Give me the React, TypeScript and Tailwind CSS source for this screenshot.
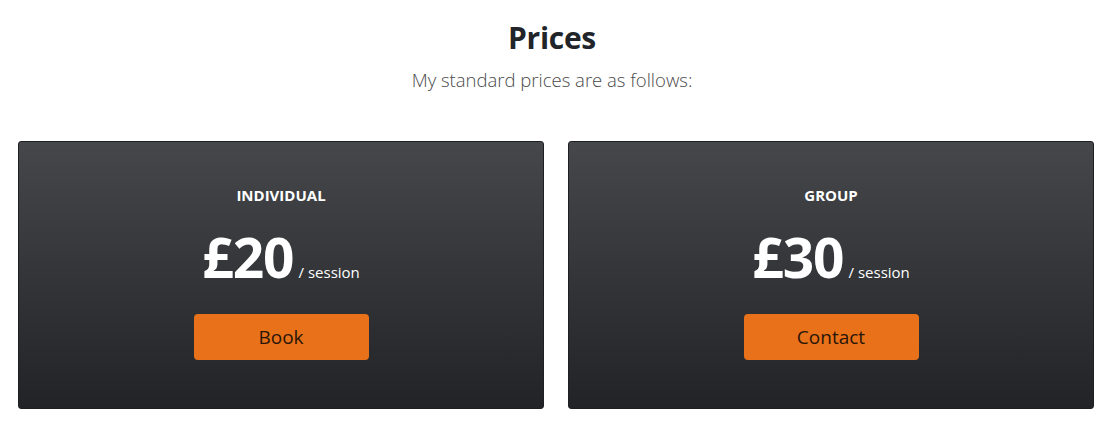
import React from "react";

const plans = [
  { name: "INDIVIDUAL", price: "£20", action: "Book" },
  { name: "GROUP", price: "£30", action: "Contact" },
];

export default function App() {
  return (
    <div className="min-h-screen w-full bg-white font-['Open_Sans',sans-serif] text-[#212529]">
      <div className="pt-[14px] text-center">
        <h1 className="text-[30px] font-bold leading-[48px] tracking-[-0.3px]">Prices</h1>
        <p className="mt-[4px] text-[18.5px] font-light leading-[28px] text-[#4a4a4a]">
          My standard prices are as follows:
        </p>
      </div>

      <div className="mt-[47px] flex gap-[24px] pl-[18px] pr-[10px]">
        {plans.map((plan) => (
          <div
            key={plan.name}
            className="flex h-[268px] flex-1 flex-col items-center rounded-[3px] border border-[#1d1f22] bg-[linear-gradient(to_bottom,#45474a,#212327)] pt-[43px] text-white"
          >
            <h3 className="text-[15px] font-bold leading-[20px]">{plan.name}</h3>
            <div className="mt-[20px] flex items-baseline">
              <span className="text-[55px] font-bold leading-[64px] tracking-[-1px]">{plan.price}</span>
              <span className="ml-[5px] text-[15px]">/ session</span>
            </div>
            <button className="mt-[25px] h-[46px] w-[175px] rounded-[4px] bg-[#e8711a] text-[19px] text-[#2a1608]">
              {plan.action}
            </button>
          </div>
        ))}
      </div>
    </div>
  );
}
